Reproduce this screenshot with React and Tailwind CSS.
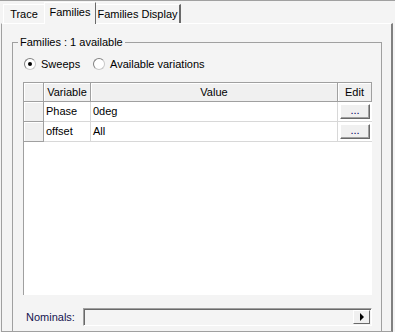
import React from 'react';

const rows = [
  { name: 'Phase', value: '0deg' },
  { name: 'offset', value: 'All' },
];

function Radio({ checked, label, className = '' }) {
  return (
    <div className={`flex items-center gap-[5px] ${className}`}>
      <div className="w-[12px] h-[12px] rounded-full bg-white border border-t-[#808080] border-l-[#808080] border-r-[#c8c8c8] border-b-[#c8c8c8] flex items-center justify-center">
        {checked && <div className="w-[4px] h-[4px] rounded-full bg-black" />}
      </div>
      <span>{label}</span>
    </div>
  );
}

function Button({ children }) {
  return (
    <div className="w-[30px] h-[15px] bg-[#f0f0f0] border border-t-white border-l-white border-r-[#696969] border-b-[#696969] shadow-[inset_-1px_-1px_0_#a0a0a0] flex items-center justify-center text-[#000060] leading-none pb-[3px]">
      {children}
    </div>
  );
}

export default function App() {
  const headCell = 'h-[19px] bg-[#f0f0f0] border-r border-b border-[#a0a0a0] shadow-[inset_1px_1px_0_#ffffff] flex items-center justify-center';
  const rowHead = 'h-[20px] bg-[#f0f0f0] border-r border-b border-[#a0a0a0] shadow-[inset_1px_1px_0_#ffffff]';
  const cell = 'h-[20px] border-r border-b border-[#d8d8d8] flex items-center pl-[2px]';

  return (
    <div className="w-[395px] h-[332px] bg-[#f4f4f4] border-t border-[#a0a0a0] flex flex-col font-['Liberation_Sans',Arial,sans-serif] text-[11px] leading-[13px] text-black overflow-hidden">
      {/* tabs */}
      <div className="h-[22px] flex items-end pl-[3px] shrink-0">
        <div className="w-[41px] h-[19px] border-t border-l border-white flex items-center justify-center">
          Trace
        </div>
        <div className="relative z-10 -mb-px w-[52px] h-[22px] bg-[#f4f4f4] border-t border-l border-white border-r border-r-[#696969] flex items-center justify-center pb-[3px]">
          Families
        </div>
        <div className="w-[85px] h-[19px] border-t border-t-white border-r-2 border-r-[#696969] flex items-center justify-center">
          Families Display
        </div>
      </div>

      {/* panel */}
      <div className="flex-1 ml-px w-[392px] border-t border-t-white border-l border-l-[#a0a0a0] border-r-2 border-r-[#808080] border-b border-b-[#a0a0a0] pl-[10px] pt-[12px] flex flex-col overflow-hidden">
        <fieldset className="w-[370px] flex-1 border border-b-0 border-[#a0a0a0] min-h-0">
          <legend className="ml-[5px] px-[2px]">Families : 1 available</legend>

          <div className="mt-[8px] pl-[11px] h-[14px] flex items-center">
            <Radio checked label="Sweeps" className="w-[69px]" />
            <Radio label="Available variations" />
          </div>

          <div className="mt-[11px] ml-[10px] w-[349px] h-[213px] bg-white border-l border-t border-[#a0a0a0]">
            <div className="grid grid-cols-[20px_47px_247px_34px]">
              <div className={headCell} />
              <div className={headCell}>Variable</div>
              <div className={headCell}>Value</div>
              <div className={headCell}>Edit</div>
              {rows.map((r) => (
                <React.Fragment key={r.name}>
                  <div className={rowHead} />
                  <div className={cell}>{r.name}</div>
                  <div className={cell}>{r.value}</div>
                  <div className="h-[20px] border-b border-[#d8d8d8] pl-[2px] pt-[2px]">
                    <Button>...</Button>
                  </div>
                </React.Fragment>
              ))}
            </div>
          </div>

          <div className="mt-[13px] flex items-center">
            <span className="w-[70px] pl-[13px] text-[#141450]">Nominals:</span>
            <div className="w-[289px] h-[18px] border border-t-[#a0a0a0] border-l-[#a0a0a0] border-r-white border-b-white shadow-[inset_1px_1px_0_#696969] flex items-center justify-end pr-px">
              <div className="w-[17px] h-[14px] bg-[#f0f0f0] border border-t-white border-l-white border-r-[#696969] border-b-[#696969] flex items-center justify-center">
                <div className="w-0 h-0 border-y-[4px] border-y-transparent border-l-[4px] border-l-black" />
              </div>
            </div>
          </div>
        </fieldset>
      </div>
    </div>
  );
}
